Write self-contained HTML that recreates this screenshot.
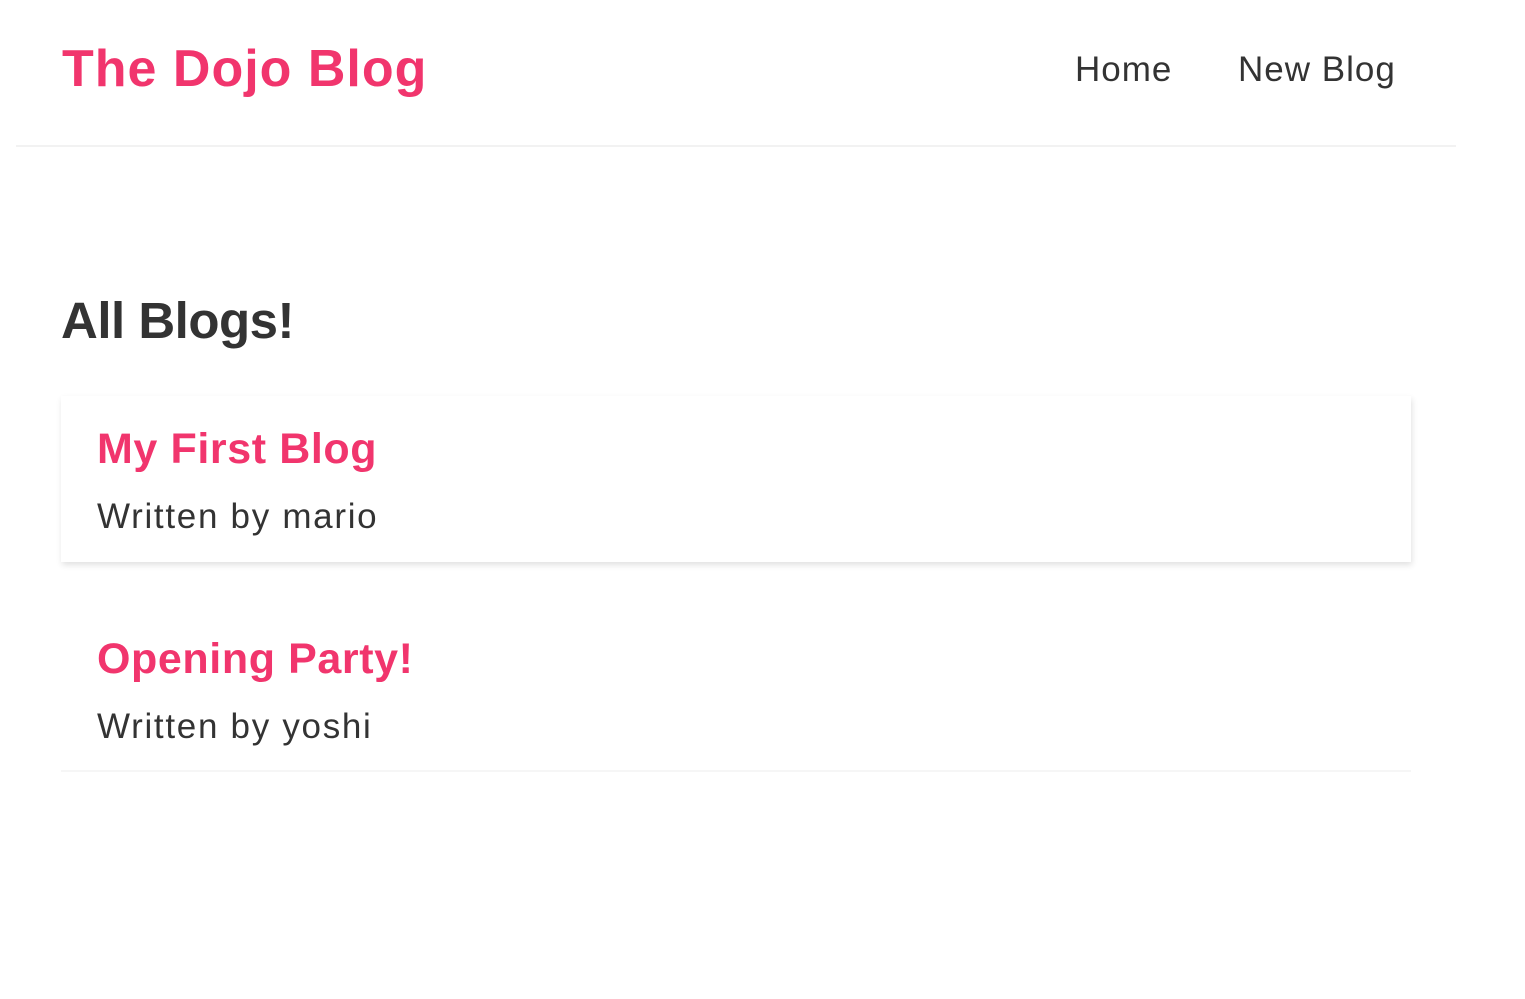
<!DOCTYPE html>
<html><head><meta charset="utf-8"><style>
*{margin:0;padding:0;box-sizing:border-box}
body{width:1525px;height:999px;background:#fff;font-family:"Liberation Sans",sans-serif;color:#333;position:relative;overflow:hidden}
.nav{position:absolute;left:16px;top:0;width:1440px;height:147px;border-bottom:2px solid #f2f2f2}
.logo{position:absolute;left:46px;top:39px;font-size:52px;font-weight:bold;color:#f1356d;letter-spacing:1px}
.links{position:absolute;top:50px;font-size:35px;color:#333;letter-spacing:1px}
h2{position:absolute;left:61px;top:291px;font-size:51px;font-weight:bold;color:#333;letter-spacing:-0.5px}
.card{position:absolute;left:61px;width:1350px;height:166px;padding:0 36px}
.c1{top:396px;box-shadow:1px 3px 6px rgba(0,0,0,0.12)}
.c2{top:606px;border-bottom:2px solid #f6f6f6}
.card .t{position:absolute;left:36px;top:29px;font-size:43px;font-weight:bold;color:#f1356d;letter-spacing:0.6px}
.card .a{position:absolute;left:36px;top:101px;font-size:35px;color:#333;letter-spacing:1.7px}
</style></head><body>
<div class="nav">
<div class="logo">The Dojo Blog</div>
<div class="links" style="left:1059px">Home</div>
<div class="links" style="left:1222px">New Blog</div>
</div>
<h2>All Blogs!</h2>
<div class="card c1"><div class="t">My First Blog</div><div class="a">Written by mario</div></div>
<div class="card c2"><div class="t">Opening Party!</div><div class="a">Written by yoshi</div></div>
</body></html>
